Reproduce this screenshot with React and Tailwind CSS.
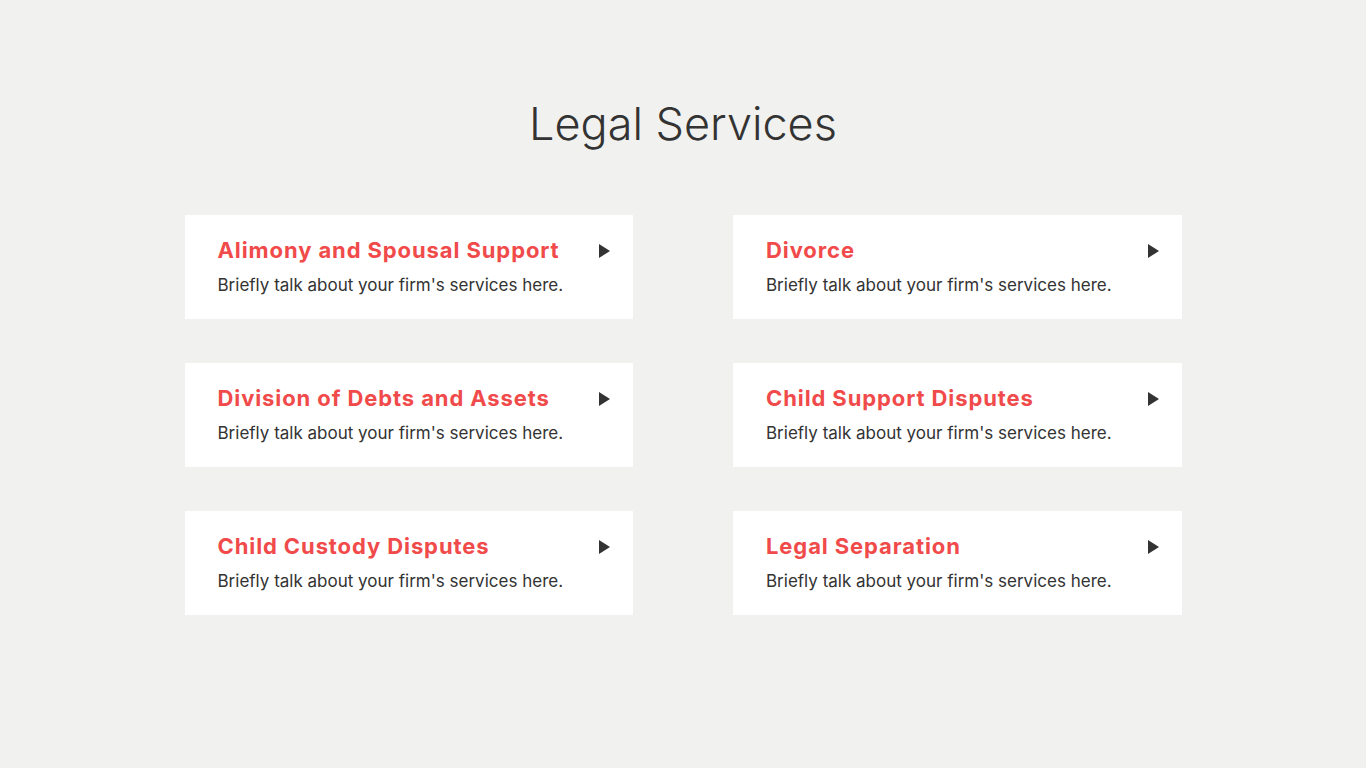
const services = [
  "Alimony and Spousal Support",
  "Divorce",
  "Division of Debts and Assets",
  "Child Support Disputes",
  "Child Custody Disputes",
  "Legal Separation",
];

function ServiceCard({ title }) {
  return (
    <div className="bg-white h-[104px] pl-[33px] pr-[23px] flex items-start justify-between pt-[21px]">
      <div>
        <h3 className="text-[22px] leading-[28px] font-bold tracking-[0.9px] text-[#f04a4a]">{title}</h3>
        <p className="mt-[9px] text-[17px] leading-[24px] text-[#333333]">
          Briefly talk about your firm's services here.
        </p>
      </div>
      <svg width="11" height="14" viewBox="0 0 11 14" className="mt-[8px]">
        <path d="M0 0 L11 7 L0 14 Z" fill="#333333" />
      </svg>
    </div>
  );
}

export default function App() {
  return (
    <div className="min-h-[768px] bg-[#f1f1ef] font-['Inter',sans-serif] pt-[96px]">
      <h1 className="text-center text-[45px] leading-[56px] font-light text-[#333333]">
        Legal Services
      </h1>
      <div className="mt-[63px] mx-auto w-[997px] grid grid-cols-2 gap-x-[100px] gap-y-[44px]">
        {services.map((s) => (
          <ServiceCard key={s} title={s} />
        ))}
      </div>
    </div>
  );
}
